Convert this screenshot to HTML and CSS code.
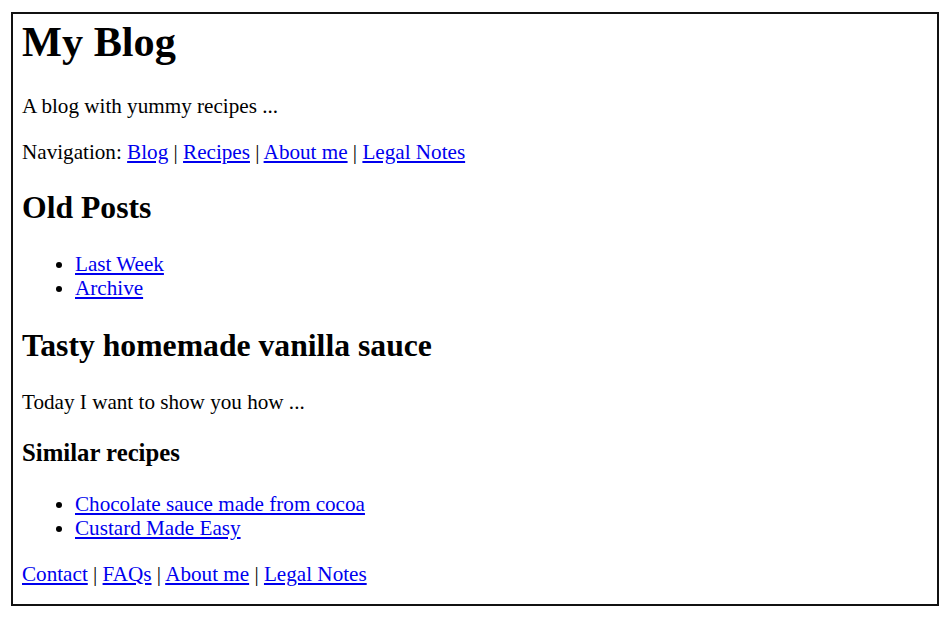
FILE: index.html
```html
<!DOCTYPE html>
<html lang="en">
<head>
<meta charset="utf-8">
<title>My Blog</title>
<link rel="stylesheet" href="styles.css">
</head>
<body>
<div class="page">
  <header class="site-header">
    <h1 class="title">My Blog</h1>
    <p>A blog with yummy recipes ...</p>
  </header>
  <nav class="site-nav">
    <p>Navigation: <a href="#">Blog</a> | <a href="#">Recipes</a> | <a href="#">About me</a> | <a href="#">Legal Notes</a></p>
  </nav>
  <aside class="old-posts">
    <h2>Old Posts</h2>
    <ul class="links">
      <li><a href="#">Last Week</a></li>
      <li><a href="#">Archive</a></li>
    </ul>
  </aside>
  <article class="post">
    <h2 class="post-title">Tasty homemade vanilla sauce</h2>
    <p>Today I want to show you how ...</p>
    <section class="similar">
      <h3>Similar recipes</h3>
      <ul class="links">
        <li><a href="#">Chocolate sauce made from cocoa</a></li>
        <li><a href="#">Custard Made Easy</a></li>
      </ul>
    </section>
  </article>
  <footer class="site-footer">
    <p><a href="#">Contact</a> | <a href="#">FAQs</a> | <a href="#">About me</a> | <a href="#">Legal Notes</a></p>
  </footer>
</div>
</body>
</html>
```
FILE: styles.css
```css
html, body {
  margin: 0;
  padding: 0;
  background: #fff;
}
body {
  font-family: "Liberation Serif", "Times New Roman", serif;
  font-size: 21.15px;
  line-height: 24px;
  color: #000;
}
.page {
  margin: 12px 13px 0 11px;
  border: 2px solid #111;
  padding: 4px 9px 0 9px;
  height: 586px;
  box-sizing: content-box;
}
.title {
  font-size: 42.3px;
  line-height: 48px;
  margin: 0 0 28px;
}
h2 {
  font-size: 31.7px;
  line-height: 36px;
  margin: 26px 0;
}
.post-title {
  margin-top: 28px;
}
h3 {
  font-size: 24.75px;
  line-height: 28.5px;
  margin: 24.75px 0;
}
p {
  margin: 22px 0;
}
.links {
  margin: 22px 0;
  padding-left: 53px;
}
a {
  color: #0000ee;
}
```
